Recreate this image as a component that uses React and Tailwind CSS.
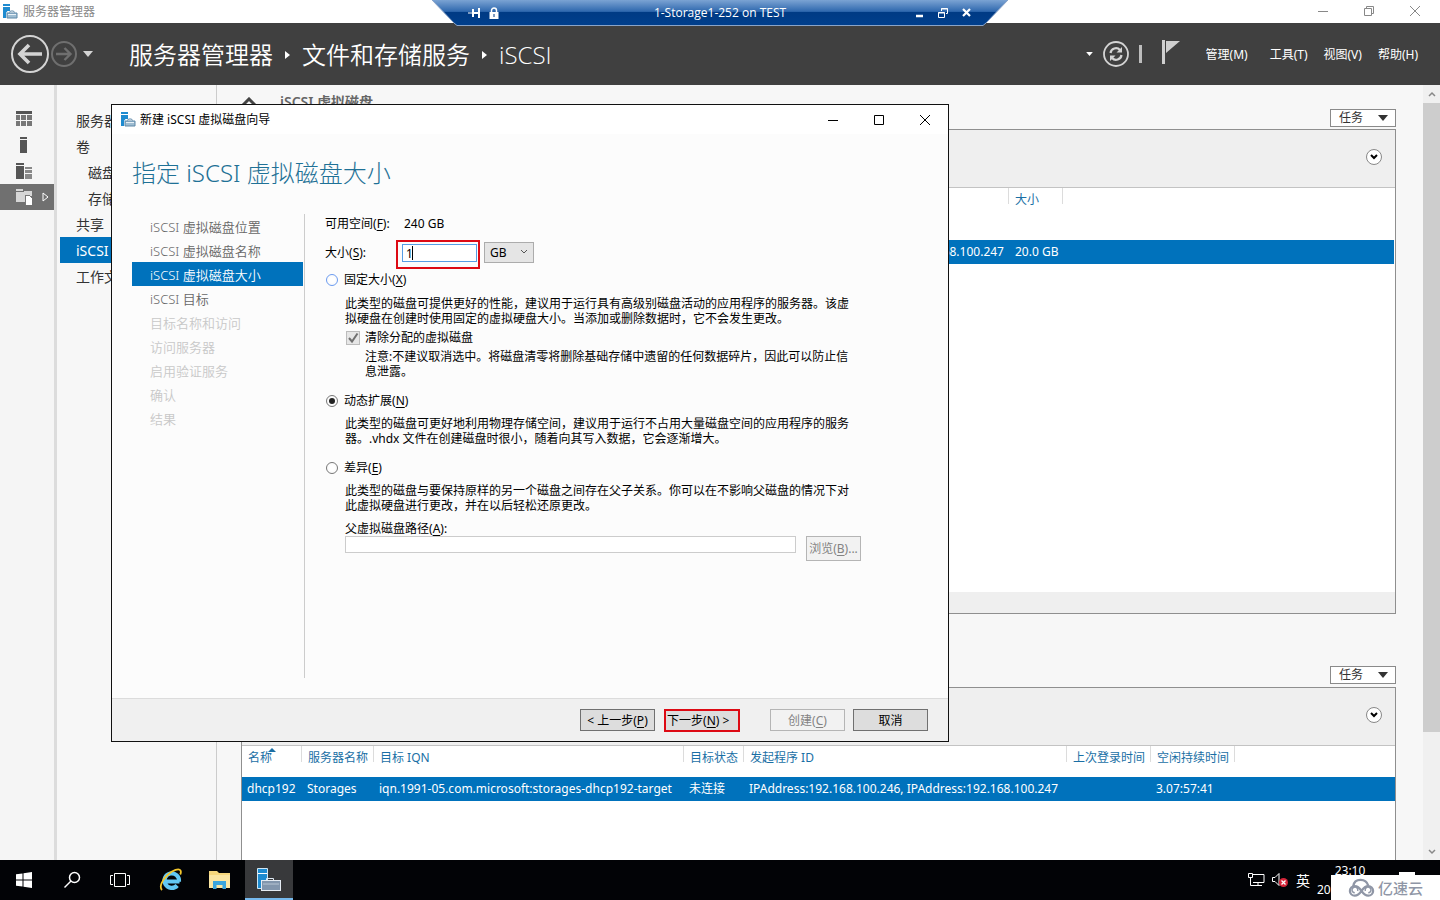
import { useState } from 'react';

const railIcons = ['dashboard', 'server', 'servers', 'storage'];

const navItems = [
  { label: '服务器' },
  { label: '卷' },
  { label: '磁盘', indent: true },
  { label: '存储池', indent: true },
  { label: '共享' },
  { label: 'iSCSI', active: true },
  { label: '工作文件夹' },
];

const steps = [
  { label: 'iSCSI 虚拟磁盘位置', state: 'done' },
  { label: 'iSCSI 虚拟磁盘名称', state: 'done' },
  { label: 'iSCSI 虚拟磁盘大小', state: 'current' },
  { label: 'iSCSI 目标', state: 'done' },
  { label: '目标名称和访问', state: 'todo' },
  { label: '访问服务器', state: 'todo' },
  { label: '启用验证服务', state: 'todo' },
  { label: '确认', state: 'todo' },
  { label: '结果', state: 'todo' },
];

const stepStyles = {
  done: 'text-[#666666]',
  current: 'bg-[#0072bc] text-white',
  todo: 'text-[#c8c8c8]',
};

const targetColumns = [
  { title: '名称', value: 'dhcp192', width: 'w-[60px]', sorted: true },
  { title: '服务器名称', value: 'Storages', width: 'w-[72px]' },
  { title: '目标 IQN', value: 'iqn.1991-05.com.microsoft:storages-dhcp192-target', width: 'w-[310px]' },
  { title: '目标状态', value: '未连接', width: 'w-[60px]' },
  { title: '发起程序 ID', value: 'IPAddress:192.168.100.246, IPAddress:192.168.100.247', width: 'w-[323px]' },
  { title: '上次登录时间', value: '', width: 'w-[84px]' },
  { title: '空闲持续时间', value: '3.07:57:41', width: 'w-[84px]' },
];

// access key in brackets after a label, e.g. 大小(S)
const Key = ({ k }) => (
  <>
    (<span className="underline underline-offset-2">{k}</span>)
  </>
);

const AppIcon = ({ className }) => (
  <svg viewBox="0 0 16 16" className={className}>
    <path d="M1 0h7v2H1zM1 3h7v4H5.500L4 9v5H1z" fill="#1e8bd0" />
    <path d="M7.500 8.500l1-1.500h3l1 1.500" fill="none" stroke="#5f88a8" />
    <path d="M5 9h10v5H5z" fill="#9fbdd2" stroke="#5f88a8" />
    <path d="M6 10.500h8" stroke="#e8f1f7" />
  </svg>
);

const RailIcon = ({ name }) => (
  <svg viewBox="0 0 16 16" className="h-4 w-4 shrink-0" shapeRendering="crispEdges">
    {name === 'dashboard' && (
      <g fill="#777">
        <rect width="16" height="3" fill="#555" />
        <rect y="4" width="4" height="5" /><rect x="5" y="4" width="5" height="5" /><rect x="11" y="4" width="5" height="5" />
        <rect y="10" width="4" height="5" /><rect x="5" y="10" width="5" height="5" /><rect x="11" y="10" width="5" height="5" />
      </g>
    )}
    {name === 'server' && (
      <g fill="#555">
        <rect x="4" width="7" height="2" /><rect x="4" y="3" width="7" height="13" />
      </g>
    )}
    {name === 'servers' && (
      <g fill="#555">
        <rect width="8" height="2" /><rect y="3" width="8" height="13" />
        <rect x="9" y="4" width="7" height="2" fill="#888" /><rect x="9" y="7" width="7" height="3" fill="#888" /><rect x="9" y="11" width="7" height="5" fill="#888" />
      </g>
    )}
    {name === 'storage' && (
      <g fill="#d6d6d6">
        <rect width="7" height="2" /><rect y="3" width="9" height="10" /><rect x="8" y="2" width="8" height="5" />
        <path d="M9 6h4l3 3v7H9z" fill="#fff" stroke="#777" />
      </g>
    )}
  </svg>
);

const Caret = ({ className }) => (
  <svg viewBox="0 0 10 6" className={className}><path d="M0 0h10L5 6z" fill="currentColor" /></svg>
);

const TasksButton = () => (
  <button className="flex h-[18px] w-[66px] items-center justify-between border border-[#8a8a8a] bg-white pr-[7px] pl-2 text-[12px] leading-4 text-[#333]">
    任务
    <Caret className="h-1.5 w-2.5" />
  </button>
);

const FilterBar = () => (
  <div className="flex h-[58px] shrink-0 items-center justify-end border-b border-[#c3c3c3] bg-[#efefef] px-[13px]">
    <button aria-label="展开" className="mb-1 flex h-4 w-4 items-center justify-center rounded-full border border-[#888] bg-white">
      <svg viewBox="0 0 8 6" className="h-1.5 w-2"><path d="M1 1l3 3 3-3" fill="none" stroke="#000" strokeWidth="2" /></svg>
    </button>
  </div>
);

const TitleBar = () => (
  <div className="flex h-[23px] shrink-0 items-center bg-white pl-0.5 text-[12px] text-[#888]">
    <AppIcon className="h-4 w-4" />
    <span className="ml-[5px]">服务器管理器</span>
    <div className="ml-auto flex items-center gap-[34px] pr-[19px] pb-0.5">
      <button aria-label="最小化"><svg viewBox="0 0 12 12" className="h-3 w-3" fill="none" stroke="#888"><path d="M1 6.500h10" /></svg></button>
      <button aria-label="还原"><svg viewBox="0 0 12 12" className="h-3 w-3" fill="none" stroke="#888"><path d="M1.500 3.500h7v7h-7zM3.500 3V1.500h7v7H9" /></svg></button>
      <button aria-label="关闭"><svg viewBox="0 0 12 12" className="h-3 w-3" fill="none" stroke="#888"><path d="M1 1l10 10M11 1L1 11" /></svg></button>
    </div>
  </div>
);

const RemoteBar = () => (
  <div className="absolute inset-x-0 top-0 mx-auto h-[26px] w-[576px]">
    <svg viewBox="0 0 576 26" className="absolute inset-0 h-full w-full">
      <defs>
        <linearGradient id="bar" x1="0" y1="0" x2="0" y2="1">
          <stop offset="0" stopColor="#7ba3d3" />
          <stop offset="0.45" stopColor="#2f68ae" />
          <stop offset="0.46" stopColor="#003a84" />
          <stop offset="1" stopColor="#003f8c" />
        </linearGradient>
      </defs>
      <path d="M0 0L22 23L25 25.500H551L554 23L576 0z" fill="url(#bar)" />
      <path d="M0 0L22 23L25 25.500H551L554 23L576 0" fill="none" stroke="#8aa4c8" />
    </svg>
    <div className="relative flex h-[26px] items-center px-9 font-['Open_Sans'] text-[12px] text-white">
      <div className="flex flex-1 items-center gap-[9px]">
        <svg viewBox="0 0 12 10" className="h-2.5 w-3" fill="none" stroke="#fff" strokeWidth="2"><path d="M0 5h5" strokeWidth="1" /><path d="M5 1v8M11 0v10M5 5h6" /></svg>
        <svg viewBox="0 0 10 12" className="h-3 w-2.5"><path d="M2.500 6V3.500a2.500 2.500 0 0 1 5 0V6" fill="none" stroke="#fff" strokeWidth="1.500" /><path d="M0.500 5h9v7h-9z" fill="#fff" /><path d="M5 7v3" stroke="#003a84" /></svg>
      </div>
      <span>1-Storage1-252 on TEST</span>
      <div className="flex flex-1 items-center justify-end gap-3.5">
        <svg viewBox="0 0 8 10" className="h-2.5 w-2"><path d="M0 8h7" stroke="#fff" strokeWidth="2.500" /></svg>
        <svg viewBox="0 0 10 10" className="h-2.5 w-2.5" fill="none" stroke="#fff"><path d="M0.500 4.500h6v5h-6zM0 5h7M3.500 3V0.500h6v5H8M3 1h7" /></svg>
        <svg viewBox="0 0 10 10" className="h-2.5 w-2.5"><path d="M1 1l7 7M8 1L1 8" stroke="#fff" strokeWidth="2.200" /></svg>
      </div>
    </div>
  </div>
);

const Header = () => (
  <header className="flex h-[62px] shrink-0 items-center bg-[#404040] pr-[22px] pl-2.5 text-white">
    <button aria-label="后退">
      <svg viewBox="0 0 40 40" className="h-10 w-10" fill="none" stroke="#d4d4d4">
        <circle cx="20" cy="20" r="18" strokeWidth="2" />
        <path d="M32 20H11M19 11l-9 9 9 9" strokeWidth="3.600" />
      </svg>
    </button>
    <button aria-label="前进">
      <svg viewBox="0 0 28 28" className="h-7 w-7" fill="none" stroke="#6f6f6f">
        <circle cx="14" cy="14" r="12" strokeWidth="2" />
        <path d="M6 14h14M14.500 8l6 6-6 6" strokeWidth="2.400" />
      </svg>
    </button>
    <Caret className="ml-[5px] h-1.5 w-2.5 text-[#d4d4d4]" />
    <h1 className="ml-9 flex items-center pt-0.5 font-['Open_Sans','Noto_Sans_CJK_SC',sans-serif] text-[24px] font-[350]">
      服务器管理器
      <svg viewBox="0 0 5 8" className="mr-3 ml-3 h-2 w-[5px]"><path d="M0 0l5 4-5 4z" fill="#fff" /></svg>
      文件和存储服务
      <svg viewBox="0 0 5 8" className="mr-3 ml-3 h-2 w-[5px]"><path d="M0 0l5 4-5 4z" fill="#fff" /></svg>
      <span className="font-light">iSCSI</span>
    </h1>
    <div className="ml-auto flex items-center text-[12px]">
      <Caret className="h-1 w-[7px]" />
      <button aria-label="刷新" className="ml-2.5">
        <svg viewBox="0 0 26 26" className="h-[26px] w-[26px]" fill="none" stroke="#d4d4d4">
          <circle cx="13" cy="13" r="12" strokeWidth="1.800" />
          <path d="M7.500 12a5.500 5.500 0 0 1 9.500-3M18.500 14a5.500 5.500 0 0 1-9.500 3" strokeWidth="2.200" />
          <path d="M19 6v5.500h-5.500zM7 20v-5.500h5.500z" fill="#d4d4d4" stroke="none" />
        </svg>
      </button>
      <span className="ml-2.5 h-[18px] w-[3px] bg-[#bdbdbd]" />
      <button aria-label="通知" className="ml-5">
        <svg viewBox="0 0 18 24" className="mb-1 h-6 w-[18px]"><path d="M0 0h3v24H0zM4 1h14L4 13z" fill="#cfcfcf" /></svg>
      </button>
      <div className="ml-[26px] flex items-center gap-4 pt-0.5">
        <button className="mr-1.5">管理(M)</button>
        <button>工具(T)</button>
        <button>视图(V)</button>
        <button>帮助(H)</button>
      </div>
    </div>
  </header>
);

const Sidebar = () => (
  <>
    <div className="w-[57px] shrink-0 border-r-[3px] border-[#dcdcdc] bg-[#f5f5f5] pt-[21px]">
      {railIcons.map((name) => (
        <button
          key={name}
          aria-label={name}
          className={`flex h-[26px] w-full items-center gap-2.5 pl-4 ${name === 'storage' ? 'bg-[#707070]' : ''}`}
        >
          <RailIcon name={name} />
          {name === 'storage' && (
            <svg viewBox="0 0 7 10" className="h-2.5 w-[7px]"><path d="M1 1l5 4-5 4z" fill="none" stroke="#fff" /></svg>
          )}
        </button>
      ))}
    </div>
    <nav className="w-[160px] shrink-0 border-r border-[#cccccc] pt-[22px] pl-[3px] text-[14px] text-[#333]">
      {navItems.map((item) => (
        <a
          key={item.label}
          href="#"
          className={`flex h-[26px] items-center ${item.indent ? 'pl-7' : 'pl-4'} ${item.active ? 'bg-[#0072bc] text-white' : ''}`}
        >
          {item.label}
        </a>
      ))}
    </nav>
  </>
);

const DiskPanel = () => (
  <section>
    <div className="flex h-[44px] items-start justify-between pt-2">
      <h2 className="flex items-center gap-[23px] text-[14px] leading-[18px] font-semibold text-[#666]">
        <svg viewBox="0 0 16 10" className="h-2.5 w-4"><path d="M2 8l6-6 6 6" fill="none" stroke="#444" strokeWidth="3" /></svg>
        iSCSI 虚拟磁盘
      </h2>
      <div className="pt-4"><TasksButton /></div>
    </div>
    <div className="flex h-[485px] flex-col border border-[#8f8f8f] bg-white">
      <FilterBar />
      <div className="flex-1 pr-px">
        <table className="w-full table-fixed border-collapse text-left text-[12px]">
          <thead>
            <tr className="h-[52px] text-[#1a6fa5]">
              <th className="w-[766px] font-normal" />
              <th className="w-[55px] p-0 align-top font-normal">
                <div className="flex h-4 border-x border-[#dcdcdc] pt-[3px] pl-1.5">大小</div>
              </th>
              <th />
            </tr>
          </thead>
          <tbody>
            <tr className="h-6 bg-[#0072bc] text-white">
              <td className="p-0 pr-1 text-right">192.168.100.247</td>
              <td className="p-0 pl-[7px] whitespace-nowrap">20.0 GB</td>
              <td />
            </tr>
          </tbody>
        </table>
      </div>
      <div className="h-[21px] bg-[#efefef]" />
    </div>
  </section>
);

const TargetPanel = () => (
  <section className="flex min-h-0 flex-1 flex-col">
    <div className="flex h-[73px] shrink-0 items-end justify-end pb-[3px]">
      <TasksButton />
    </div>
    <div className="flex min-h-0 flex-1 flex-col overflow-hidden border border-b-0 border-[#8f8f8f] bg-white">
      <FilterBar />
      <table className="w-full table-fixed border-collapse text-left text-[12px]">
        <thead>
          <tr className="h-[31px] text-[#1a6fa5]">
            {targetColumns.map((col) => (
              <th key={col.title} className={`${col.width} p-0 align-top font-normal`}>
                <div className="relative h-4 border-r border-[#dcdcdc] pt-[3px] pl-1.5 whitespace-nowrap">
                  {col.title}
                  {col.sorted && (
                    <svg viewBox="0 0 8 4" className="absolute top-0.5 left-[26px] h-1 w-2"><path d="M0 4l4-4 4 4z" fill="#1a6fa5" /></svg>
                  )}
                </div>
              </th>
            ))}
            <th />
          </tr>
        </thead>
        <tbody>
          <tr className="h-6 bg-[#0072bc] text-white">
            {targetColumns.map((col) => (
              <td key={col.title} className="p-0 pl-[5px] whitespace-nowrap">{col.value}</td>
            ))}
            <td />
          </tr>
        </tbody>
      </table>
    </div>
  </section>
);

const ScrollBar = () => (
  <div className="flex w-[17px] shrink-0 flex-col items-center bg-[#f0f0f0] text-[#888]">
    <svg viewBox="0 0 8 18" className="h-[18px] w-2"><path d="M1 11l3-3 3 3" fill="none" stroke="currentColor" strokeWidth="1.500" /></svg>
    <div className="w-full flex-[629] bg-[#cdcdcd]" />
    <div className="flex-[110]" />
    <svg viewBox="0 0 8 18" className="h-[18px] w-2"><path d="M1 8l3 3 3-3" fill="none" stroke="currentColor" strokeWidth="1.500" /></svg>
  </div>
);

const radioStyle =
  'm-0 mr-1.5 ml-px h-3 w-3 shrink-0 appearance-none rounded-full border bg-white bg-clip-content p-0.5 checked:bg-[#222]';

const WizardForm = () => {
  const [size, setSize] = useState('1');
  const [type, setType] = useState('dynamic');

  return (
    <form className="flex-1 pt-0.5 pl-5 text-[12px] leading-[15px] text-black" onSubmit={(e) => e.preventDefault()}>
      <div className="flex">
        <span className="w-[79px]">可用空间<Key k="F" />:</span>
        <span>240 GB</span>
      </div>
      <div className="mt-[9px] flex items-center">
        <label htmlFor="size" className="mb-1 w-[71px]">大小<Key k="S" />:</label>
        <div className="relative border-2 border-[#dd0a14] pt-0.5 pr-px pb-[5px] pl-1">
          <input
            id="size"
            value={size}
            onChange={(e) => setSize(e.target.value)}
            className="block h-[18px] w-[75px] border border-[#569de5] bg-white px-[3px] leading-4 outline-none"
          />
          <span className="absolute top-1 left-[14px] h-3.5 w-px bg-black" />
        </div>
        <div className="relative mb-1 ml-1">
          <select aria-label="单位" defaultValue="GB" className="block h-[21px] w-[50px] appearance-none border border-[#acacac] bg-[#e5e5e5] pl-[5px] leading-4">
            <option>GB</option>
            <option>MB</option>
            <option>TB</option>
          </select>
          <svg viewBox="0 0 8 6" className="pointer-events-none absolute top-[7px] right-1.5 h-1.5 w-2"><path d="M1 1l3 3 3-3" fill="none" stroke="#555" /></svg>
        </div>
      </div>

      <label className="mt-[3px] flex items-center">
        <input type="radio" name="type" checked={type === 'fixed'} onChange={() => setType('fixed')} className={`${radioStyle} border-[#6b9bf0]`} />
        固定大小<Key k="X" />
      </label>
      <div className="mt-[9px] pl-5">
        <p>此类型的磁盘可提供更好的性能，建议用于运行具有高级别磁盘活动的应用程序的服务器。该虚<br />拟硬盘在创建时使用固定的虚拟硬盘大小。当添加或删除数据时，它不会发生更改。</p>
        <label className="mt-1 flex items-center">
          <span className="relative mr-[5px] ml-px h-3.5 w-3.5">
            <input type="checkbox" defaultChecked disabled className="block h-3.5 w-3.5 appearance-none border border-[#bcbcbc] bg-[#e6e6e6]" />
            <svg viewBox="0 0 14 14" className="absolute inset-0 h-3.5 w-3.5"><path d="M3 7l3 3.500 5.500-8" fill="none" stroke="#707070" strokeWidth="2" /></svg>
          </span>
          清除分配的虚拟磁盘
        </label>
        <p className="mt-1 pl-5">注意:不建议取消选中。将磁盘清零将删除基础存储中遗留的任何数据碎片，因此可以防止信<br />息泄露。</p>
      </div>

      <label className="mt-3.5 flex items-center">
        <input type="radio" name="type" checked={type === 'dynamic'} onChange={() => setType('dynamic')} className={`${radioStyle} border-[#777777]`} />
        动态扩展<Key k="N" />
      </label>
      <p className="mt-2 pl-5">此类型的磁盘可更好地利用物理存储空间，建议用于运行不占用大量磁盘空间的应用程序的服务<br />器。.vhdx 文件在创建磁盘时很小，随着向其写入数据，它会逐渐增大。</p>

      <label className="mt-3.5 flex items-center">
        <input type="radio" name="type" checked={type === 'diff'} onChange={() => setType('diff')} className={`${radioStyle} border-[#777777]`} />
        差异<Key k="E" />
      </label>
      <div className="mt-2 pl-5">
        <p>此类型的磁盘与要保持原样的另一个磁盘之间存在父子关系。你可以在不影响父磁盘的情况下对<br />此虚拟硬盘进行更改，并在以后轻松还原更改。</p>
        <label htmlFor="parent" className="mt-2 block">父虚拟磁盘路径<Key k="A" />:</label>
        <div className="flex items-start gap-2.5">
          <input id="parent" disabled className="h-[17px] w-[451px] border border-[#cccccc] bg-white" />
          <button disabled className="h-[25px] w-[55px] border border-[#b5b5b5] bg-[#f2f2f2] whitespace-nowrap text-[#838383]">浏览<Key k="B" />...</button>
        </div>
      </div>
    </form>
  );
};

const Wizard = () => (
  <div role="dialog" className="absolute top-[104px] left-[111px] flex h-[638px] w-[838px] flex-col border border-[#111] bg-[#fcfcfc]">
    <div className="flex h-[29px] shrink-0 items-center bg-white pr-[17px] pl-2 text-[12px] text-black">
      <AppIcon className="h-4 w-4" />
      <span className="ml-1">新建 iSCSI 虚拟磁盘向导</span>
      <div className="ml-auto flex items-center gap-[34px]">
        <button aria-label="最小化"><svg viewBox="0 0 12 12" className="h-3 w-3" fill="none" stroke="#000"><path d="M1 6.500h10" /></svg></button>
        <button aria-label="最大化"><svg viewBox="0 0 12 12" className="h-3 w-3" fill="none" stroke="#000"><path d="M1.500 1.500h9v9h-9z" /></svg></button>
        <button aria-label="关闭"><svg viewBox="0 0 12 12" className="h-3 w-3" fill="none" stroke="#000"><path d="M1 1l10 10M11 1L1 11" /></svg></button>
      </div>
    </div>
    <h2 className="mt-[23px] pl-5 text-[24px] leading-8 font-light text-[#1f7196]">指定 iSCSI 虚拟磁盘大小</h2>
    <div className="mt-[25px] mb-5 flex min-h-0 flex-1">
      <ol className="ml-5 w-[173px] shrink-0 border-r border-[#cccccc] pr-px text-[13px] leading-5 font-[350]">
        {steps.map((step) => (
          <li key={step.label} className={`h-6 pt-[3px] pl-[18px] ${stepStyles[step.state]}`}>{step.label}</li>
        ))}
      </ol>
      <WizardForm />
    </div>
    <div className="flex h-[43px] shrink-0 items-center justify-end border-t border-[#dcdcdc] bg-[#f0f0f0] pr-5 text-[12px] text-black">
      <button className="h-[22px] w-[75px] border border-[#707070] bg-[#dddddd] pt-px whitespace-nowrap">&lt; 上一步<Key k="P" /></button>
      <button className="ml-[9px] flex h-[23px] w-[76px] items-center border-2 border-[#dd0a14] bg-[#dddddd] pt-px pl-px whitespace-nowrap"><span>下一步<Key k="N" /> &gt;</span></button>
      <button disabled className="ml-[30px] h-[22px] w-[75px] border border-[#b5b5b5] bg-[#f2f2f2] pt-px text-[#838383]">创建<Key k="C" /></button>
      <button className="ml-2 h-[22px] w-[75px] border border-[#707070] bg-[#dddddd] pt-px">取消</button>
    </div>
  </div>
);

const Taskbar = () => (
  <footer className="relative flex h-10 shrink-0 items-stretch bg-[#020306] text-white">
    <button aria-label="开始" className="flex w-12 items-center justify-center">
      <svg viewBox="0 0 16 16" className="h-4 w-4" fill="#fff"><path d="M0 2.300l6.500-.9v6.100H0zM7.500 1.300L16 0v7.500H7.500zM0 8.500h6.500v6.100L0 13.700zM7.500 8.500H16V16l-8.500-1.200z" /></svg>
    </button>
    <button aria-label="搜索" className="flex w-12 items-center justify-center">
      <svg viewBox="0 0 18 18" className="h-[18px] w-[18px]" fill="none" stroke="#fff" strokeWidth="1.500"><circle cx="11.500" cy="6.500" r="5" /><path d="M8 10l-6.500 6.500" /></svg>
    </button>
    <button aria-label="任务视图" className="flex w-12 items-center justify-center">
      <svg viewBox="0 0 20 14" className="h-3.5 w-5" fill="none" stroke="#fff"><path d="M4.500 0.500h11v13h-11zM3 2.500H0.500v9H3M17 2.500h2.500v9H17" /></svg>
    </button>
    <button aria-label="Internet Explorer" className="ml-[3px] flex w-12 items-center justify-center">
      <svg viewBox="0 0 24 24" className="h-6 w-6" fill="none">
        <path d="M20.500 13.500H7M20 13.500a7.300 7.300 0 1 0-1.800 4" stroke="#62c8f3" strokeWidth="4.200" />
        <path d="M3 22C0 19 3 12 8.500 7S20 0 21.500 2.500c.6 1 .4 2.500-.3 4" stroke="#f3c62c" strokeWidth="1.800" />
      </svg>
    </button>
    <button aria-label="文件资源管理器" className="ml-px flex w-12 items-center justify-center">
      <svg viewBox="0 0 22 18" className="h-[18px] w-[22px]"><path d="M0 0h8l2 2h11v15H0z" fill="#f6d77c" /><path d="M0 4h21v13H0z" fill="#fbe6a2" /><path d="M4 18v-8h13v8h-3.500v-4h-6v4z" fill="#3aa5dd" /></svg>
    </button>
    <button aria-label="服务器管理器" className="ml-px flex w-12 items-center justify-center border-b-2 border-[#76b9ed] bg-[#38393b]">
      <svg viewBox="0 0 26 26" className="mt-0.5 h-[26px] w-[26px]">
        <path d="M1.500 1.500h10v20h-10z" fill="#1e8bd0" stroke="#cfe6f5" /><path d="M2 6.500h9" stroke="#fff" />
        <path d="M10.500 14v-2.500h7V14" fill="none" stroke="#dfe9f2" /><rect x="5.500" y="13.500" width="19" height="10" fill="#8296ad" stroke="#e4ebf2" /><path d="M7 17h16" stroke="#b7c5d3" />
      </svg>
    </button>
    <div className="ml-auto flex items-center text-[12px] leading-[19px]">
      <svg viewBox="0 0 17 14" className="h-3.5 w-[17px]" fill="none" stroke="#fff"><path d="M4 1.500h12v8H5M6 12.500h8M10 9.500v3M0.500 0.500h4v4h-4zM2.500 4.500v8H6" /></svg>
      <svg viewBox="0 0 18 14" className="ml-[7px] h-3.5 w-[18px]">
        <path d="M0.500 4.500H3l4-4v12l-4-4H0.500z" fill="none" stroke="#fff" /><circle cx="11.500" cy="9.500" r="4.500" fill="#d5263a" /><path d="M9.500 7.500l4 4M13.500 7.500l-4 4" stroke="#fff" strokeWidth="1.300" />
      </svg>
      <span className="ml-1.5 text-[14px]">英</span>
      <div className="ml-[7px] w-[66px]">
        <div className="text-center">23:10</div>
        <div>20</div>
      </div>
      <svg viewBox="0 0 16 16" className="mr-[25px] ml-4 h-4 w-4"><path d="M0 0h16v12H0z" fill="#fff" /></svg>
    </div>
    <div className="absolute right-0 bottom-0 flex h-[25px] w-[109px] items-center gap-[3px] bg-white pl-[17px] text-[15px] leading-5 font-medium text-[#8f96a6]">
      <svg viewBox="0 0 28 20" className="h-5 w-[27px]" fill="none" stroke="#8f96a6" strokeWidth="2.400">
        <path d="M5.500 8C6 4 9 1.500 13 1.500S20 4 21 7.500" />
        <path d="M14 13c-2-3-4-5-7-5a5 5 0 0 0 0 10c3 0 5-2 7-5s4-5 7-5a5 5 0 0 1 0 10c-3 0-5-2-7-5" />
        <path d="M10 13a3 3 0 1 0-3 2M18 13a3 3 0 1 1 3 2" strokeWidth="1.500" />
      </svg>
      亿速云
    </div>
  </footer>
);

const App = () => {
  return (
    <div className="relative flex h-screen flex-col overflow-hidden bg-[#f7f7f7] font-['Noto_Sans','Noto_Sans_CJK_SC',sans-serif]">
      <TitleBar />
      <Header />
      <div className="flex min-h-0 flex-1">
        <Sidebar />
        <main className="flex min-w-0 flex-1 flex-col pr-[27px] pl-6">
          <DiskPanel />
          <TargetPanel />
        </main>
        <ScrollBar />
      </div>
      <Taskbar />
      <RemoteBar />
      <Wizard />
    </div>
  );
};

export default App;
